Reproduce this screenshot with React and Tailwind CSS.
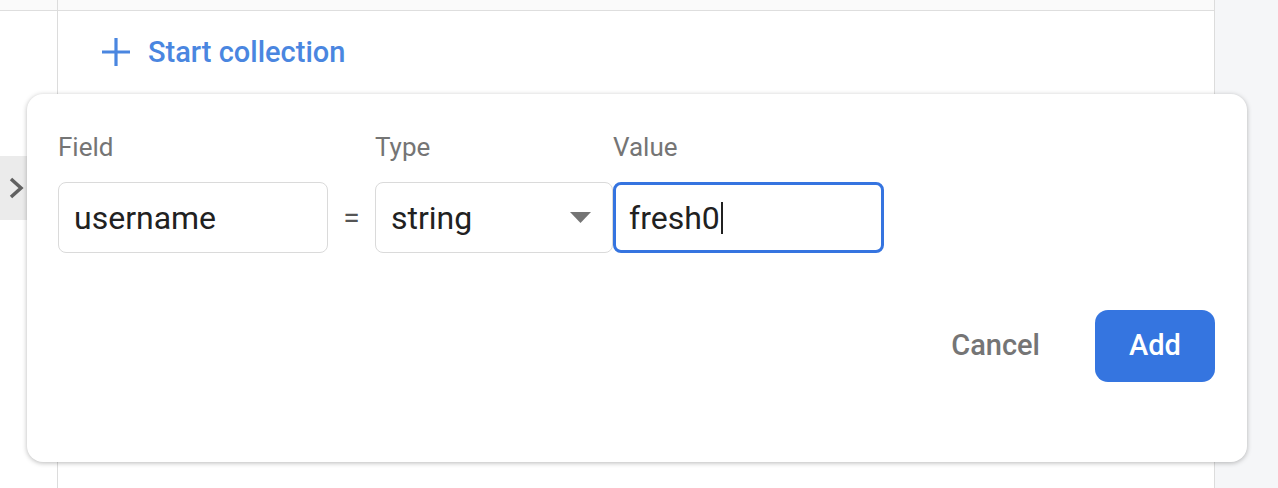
import React from 'react';

const font = { fontFamily: 'Roboto, "Liberation Sans", sans-serif' };

const Label = ({ children }) => (
    <div className="text-[26px] leading-[30px] text-[#757575]">{children}</div>
);

export default function App() {
    return (
        <div className="relative flex h-[488px] w-[1278px] overflow-hidden bg-white" style={font}>
            {/* left rail */}
            <div className="flex w-[57px] flex-col">
                <div className="h-[11px] border-b border-[#dedede] bg-[#fafafa]" />
                <div className="mt-[145px] flex h-[64px] w-[27px] items-center justify-center bg-[#ebebeb]">
                    <svg width="16" height="22" viewBox="0 0 16 22" className="ml-[5px]">
                        <path d="M3 2l10 9-10 9" fill="none" stroke="#616161" strokeWidth="3.5" />
                    </svg>
                </div>
            </div>

            {/* main panel */}
            <div className="flex flex-1 flex-col border-x border-[#dcdcdc]">
                <div className="h-[11px] border-b border-[#dedede] bg-[#fafafa]" />
                <div className="flex items-center pl-[43px] pt-[26px]">
                    <svg width="30" height="30" viewBox="0 0 30 30">
                        <path d="M15 1v28M1 15h28" stroke="#4a86e0" strokeWidth="3.2" />
                    </svg>
                    <span className="ml-[17px] text-[29px] font-medium leading-[30px] text-[#4a86e0]">Start collection</span>
                </div>
            </div>

            {/* right gutter */}
            <div className="w-[63px] bg-[#f5f6f8]" />

            {/* add field card */}
            <div className="absolute left-[27px] top-[94px] h-[368px] w-[1220px] rounded-[16px] bg-white pl-[31px] pr-[32px] pt-[38px] shadow-[0_1px_5px_rgba(0,0,0,0.28)]">
                <div className="flex items-end">
                    <div className="flex flex-col gap-[20px]">
                        <Label>Field</Label>
                        <div className="flex h-[71px] w-[270px] items-center rounded-[8px] border-[1.5px] border-[#dadada] px-[15px] text-[32px] text-[#212121]">
                            username
                        </div>
                    </div>
                    <div className="flex h-[71px] w-[47px] items-center justify-center text-[30px] text-[#555]">=</div>
                    <div className="flex flex-col gap-[20px]">
                        <Label>Type</Label>
                        <div className="flex h-[71px] w-[238px] items-center justify-between rounded-[8px] border-[1.5px] border-[#dadada] pl-[15px] pr-[21px] text-[32px] text-[#212121]">
                            string
                            <svg width="21" height="11" viewBox="0 0 21 11">
                                <path d="M0 0h21L10.5 11z" fill="#757575" />
                            </svg>
                        </div>
                    </div>
                    <div className="flex flex-col gap-[20px]">
                        <Label>Value</Label>
                        <div className="flex h-[71px] w-[271px] items-center rounded-[8px] border-[3px] border-[#3574e0] px-[13px] text-[32px] text-[#212121]">
                            fresh0
                            <span className="ml-[1px] h-[32px] w-[2px] bg-[#212121]" />
                        </div>
                    </div>
                </div>

                <div className="mt-[57px] flex items-center justify-end">
                    <button className="px-[12px] text-[29px] font-medium text-[#757575]">Cancel</button>
                    <button className="ml-[43px] flex h-[72px] w-[120px] items-center justify-center rounded-[13px] bg-[#3575e0] text-[29px] font-medium text-white">
                        Add
                    </button>
                </div>
            </div>
        </div>
    );
}
